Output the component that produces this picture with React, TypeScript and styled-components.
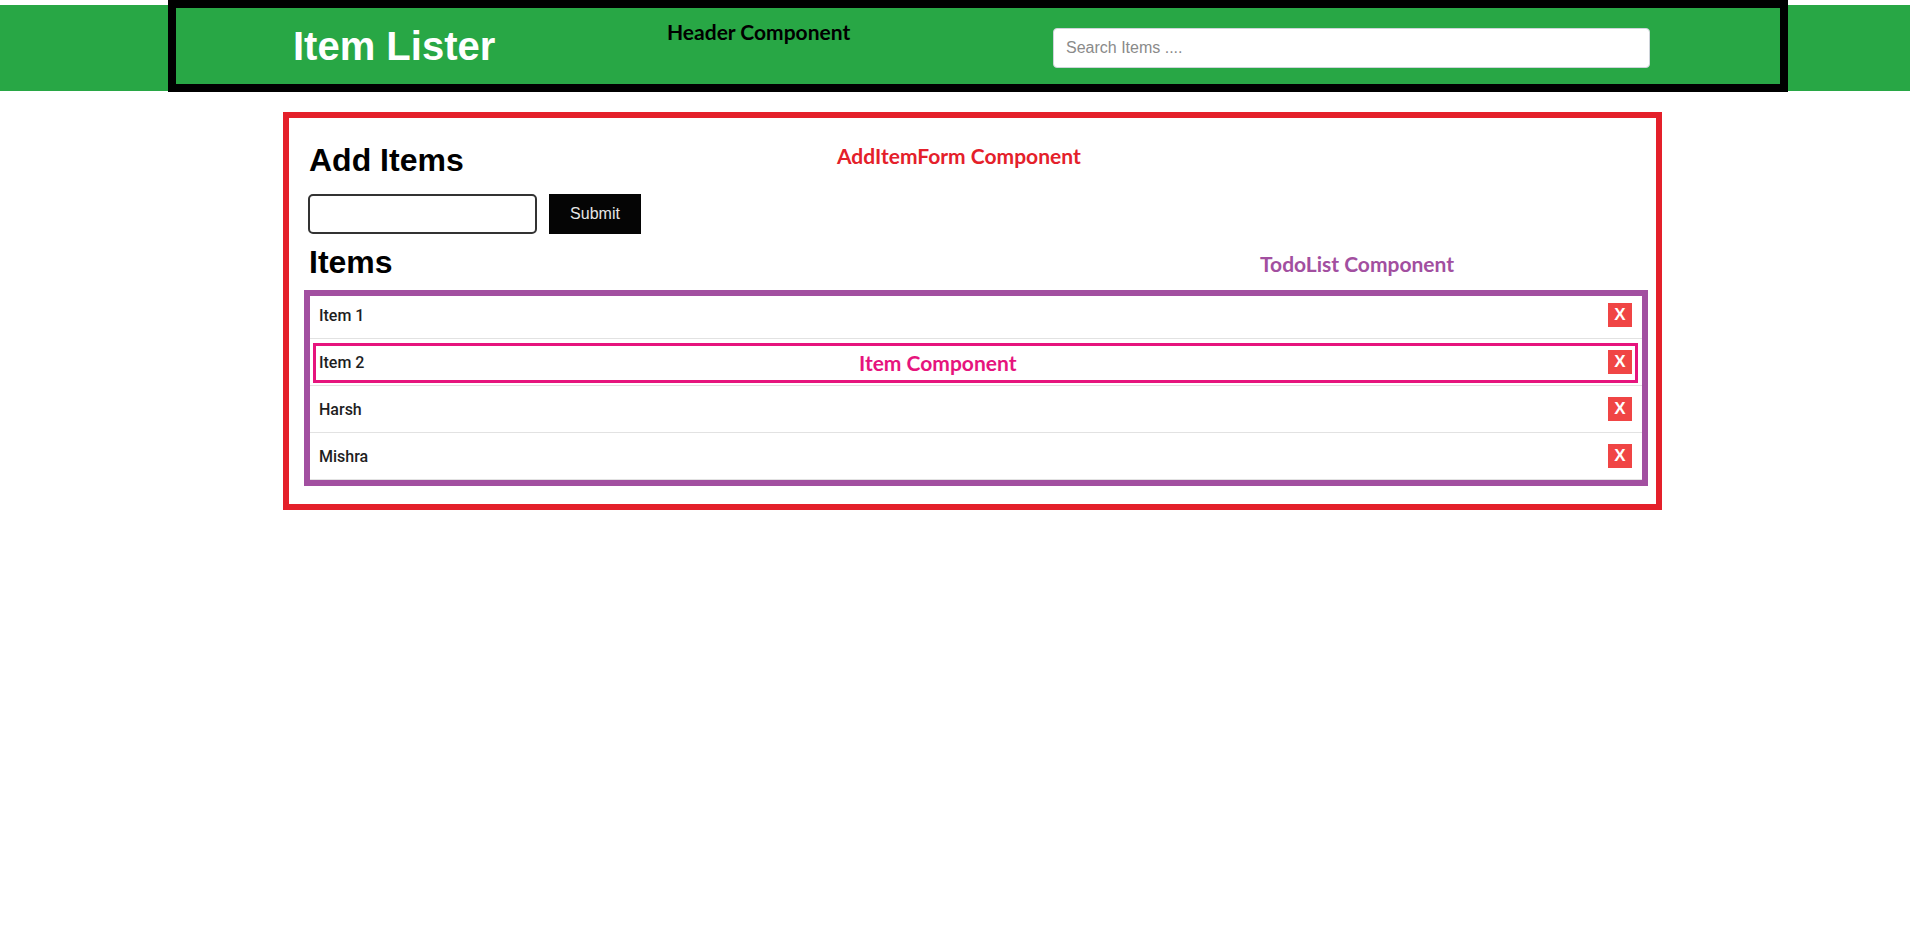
import React, { useState } from "react";
import styled, { createGlobalStyle } from "styled-components";

const GlobalStyle = createGlobalStyle`
  body {
    margin: 0;
    background: #fff;
    font-family: "Liberation Sans", Arial, sans-serif;
  }
`;

// captions of the annotated screenshot (component names)
const Caption = styled.div<{ $color: string; $top?: number }>`
  align-self: start;
  margin-top: ${(p) => p.$top ?? 0}px;
  font-family: Lato, "Open Sans", sans-serif;
  font-weight: 700;
  font-size: 21px;
  line-height: 1;
  white-space: nowrap;
  color: ${(p) => p.$color};
`;

// coloured frame drawn over a component
const Outline = styled.div<{ $color: string; $w: number }>`
  position: absolute;
  border: ${(p) => p.$w}px solid ${(p) => p.$color};
  pointer-events: none;
`;

const HeaderBar = styled.header`
  display: flex;
  align-items: flex-start;
  margin-top: 5px;
  height: 86px;
  background: #28a745;
`;

const HeaderInner = styled.div`
  box-sizing: border-box;
  margin: -5px 0 0 168px;
  width: 1620px;
  height: 92px;
  border: 8px solid #000;
  display: grid;
  grid-template-columns: 374px 1fr 597px;
  align-items: center;
  padding: 0 130px 0 117px;
`;

const Title = styled.h1`
  margin: 0;
  color: #fff;
  font-size: 40px;
  font-weight: 700;
  line-height: 46px;
`;

const SearchInput = styled.input`
  box-sizing: border-box;
  width: 100%;
  height: 40px;
  border: 1px solid #ced4da;
  border-radius: 4px;
  padding: 0 12px;
  font-family: "Liberation Sans", Arial, sans-serif;
  font-size: 16px;
  color: #495057;
  margin-top: 4px;

  &::placeholder {
    color: #8a8a8a;
  }
`;

const Main = styled.main`
  box-sizing: border-box;
  margin: 21px 0 0 283px;
  width: 1379px;
  border: 6px solid #e4202a;
  padding: 24px 14px 24px 20px;
`;

const HeadingRow = styled.div<{ $col: number; $gap?: number }>`
  display: grid;
  grid-template-columns: ${(p) => p.$col}px 1fr;
  margin-top: ${(p) => p.$gap ?? 0}px;
`;

const Heading = styled.h2`
  margin: 0;
  font-size: 32px;
  font-weight: 700;
  line-height: 36px;
  color: #000;
`;

const Form = styled.form`
  display: flex;
  gap: 12px;
  margin-top: 16px;
`;

const TextInput = styled.input`
  box-sizing: border-box;
  width: 229px;
  height: 40px;
  border: 2px solid #333;
  border-radius: 5px;
  padding: 0 8px;
  font-size: 16px;
  margin-left: -1px;
`;

const SubmitButton = styled.button`
  width: 92px;
  height: 40px;
  border: none;
  background: #050505;
  color: #e6e6e6;
  font-family: "Liberation Sans", Arial, sans-serif;
  font-size: 16px;
  cursor: pointer;
`;

const List = styled.ul`
  position: relative;
  list-style: none;
  margin: 12px 0 0;
  padding: 0;
`;

const Row = styled.li`
  position: relative;
  box-sizing: border-box;
  height: 47px;
  display: grid;
  grid-template-columns: 540px 1fr auto;
  align-items: center;
  padding: 0 10px;
  border-bottom: 1px solid #e2e2e2;
  font-family: Roboto, "Liberation Sans", sans-serif;
  font-weight: 500;
  font-size: 16px;
  color: #1e1e1e;

  ${Caption} {
    align-self: center;
  }
`;

const DeleteButton = styled.button`
  grid-column: 3;
  width: 24px;
  height: 24px;
  padding: 0;
  border: none;
  background: #f04545;
  color: #fff;
  font-family: "Liberation Sans", Arial, sans-serif;
  font-weight: 700;
  font-size: 17px;
  line-height: 24px;
  cursor: pointer;
`;

const App: React.FC = () => {
  const [items, setItems] = useState(["Item 1", "Item 2", "Harsh", "Mishra"]);
  const [text, setText] = useState("");
  const [search, setSearch] = useState("");

  const addItem = (e: React.FormEvent) => {
    e.preventDefault();
    if (!text.trim()) return;
    setItems([...items, text.trim()]);
    setText("");
  };

  const shown = items.filter((i) =>
    i.toLowerCase().includes(search.toLowerCase())
  );

  return (
    <>
      <GlobalStyle />
      <HeaderBar>
        <HeaderInner>
          <Title>Item Lister</Title>
          <Caption $color="#000" $top={13}>
            Header Component
          </Caption>
          <SearchInput
            placeholder="Search Items ...."
            value={search}
            onChange={(e) => setSearch(e.target.value)}
          />
        </HeaderInner>
      </HeaderBar>

      <Main>
        <HeadingRow $col={528}>
          <Heading>Add Items</Heading>
          <Caption $color="#e4202a" $top={3}>
            AddItemForm Component
          </Caption>
        </HeadingRow>
        <Form onSubmit={addItem}>
          <TextInput value={text} onChange={(e) => setText(e.target.value)} />
          <SubmitButton type="submit">Submit</SubmitButton>
        </Form>
        <HeadingRow $col={951} $gap={10}>
          <Heading>Items</Heading>
          <Caption $color="#a24fa0" $top={9}>
            TodoList Component
          </Caption>
        </HeadingRow>
        <List>
          {shown.map((item, idx) => (
            <Row key={item + idx}>
              <span>{item}</span>
              {idx === 1 && (
                <>
                  <Caption $color="#e6147d">Item Component</Caption>
                  <Outline
                    $color="#e6147d"
                    $w={3}
                    style={{ top: 4, left: 4, right: 4, bottom: 2 }}
                  />
                </>
              )}
              <DeleteButton
                onClick={() => setItems(items.filter((x) => x !== item))}
              >
                X
              </DeleteButton>
            </Row>
          ))}
          <Outline
            $color="#a24fa0"
            $w={6}
            style={{ top: -2, left: -5, right: -6, bottom: -6 }}
          />
        </List>
      </Main>
    </>
  );
};

export default App;
